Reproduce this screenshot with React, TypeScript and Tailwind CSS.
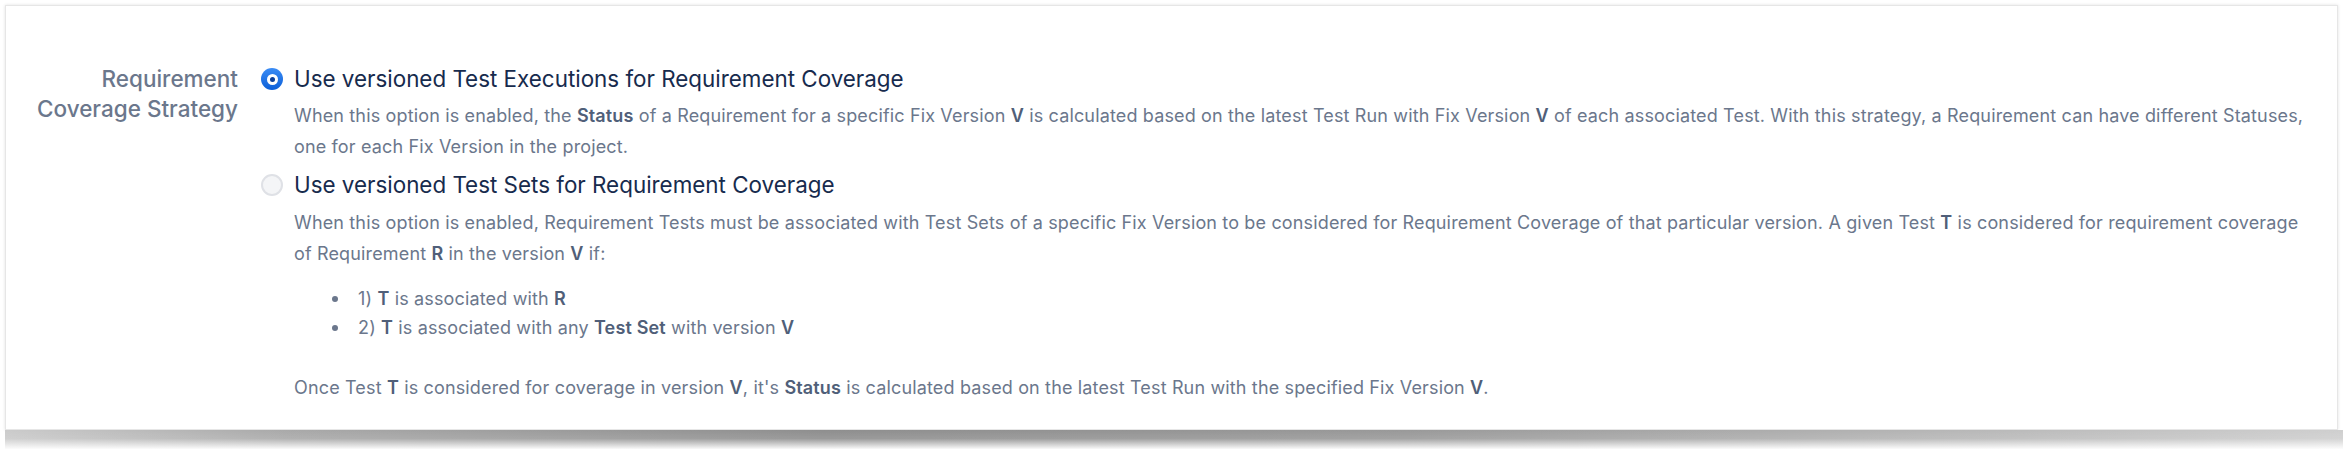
import { ReactNode } from 'react'

const B = ({ children }: { children: ReactNode }) => (
    <span className="font-semibold text-[#505f79]">{children}</span>
)

const RadioOn = () => (
    <span className="flex h-[22px] w-[22px] shrink-0 items-center justify-center rounded-full bg-[linear-gradient(to_bottom,#3b8cf5,#0c5fd8)]">
        <span className="flex h-[11px] w-[11px] items-center justify-center rounded-full bg-white">
            <span className="h-[5px] w-[5px] rounded-full bg-[#0b3f9a]" />
        </span>
    </span>
)

const RadioOff = () => (
    <span className="h-[22px] w-[22px] shrink-0 rounded-full border-2 border-[#dfe1e6] bg-[#f4f5f7]" />
)

const Bullet = ({ children }: { children: ReactNode }) => (
    <li className="flex items-center">
        <span className="ml-[38px] h-[6px] w-[6px] shrink-0 rounded-full bg-[#6b778c]" />
        <span className="ml-[20px]">{children}</span>
    </li>
)

const App = () => {
    return (
        <div className="min-h-[459px] w-[2352px] overflow-hidden bg-white pl-[5px] pt-[5px] font-['Inter',sans-serif]">
            <div className="h-[425px] w-[2333px] border border-[#e6e6e6] bg-white pt-[58px] shadow-[0_0_3px_rgba(0,0,0,0.12)]">
                <div className="flex">
                    <div className="w-[232px] shrink-0 whitespace-nowrap text-right text-[22.5px] font-medium leading-[30px] text-[#6b778c]">
                        Requirement
                        <br />
                        Coverage Strategy
                    </div>

                    <div className="ml-[23px] flex flex-col">
                        <label className="flex items-center gap-[11px]">
                            <RadioOn />
                            <span className="text-[22.4px] leading-[30px] text-[#172b4d]">
                                Use versioned Test Executions for Requirement Coverage
                            </span>
                        </label>
                        <p className="mt-[6px] w-[2085px] whitespace-nowrap pl-[33px] text-[18px] leading-[31px] tracking-[0.15px] text-[#6b778c]">
                            When this option is enabled, the <B>Status</B> of a Requirement for a specific Fix Version{' '}
                            <B>V</B> is calculated based on the latest Test Run with Fix Version <B>V</B> of each
                            associated Test. With this strategy, a Requirement can have different Statuses,
                            <br />
                            one for each Fix Version in the project.
                        </p>

                        <label className="mt-[8px] flex items-center gap-[11px]">
                            <RadioOff />
                            <span className="text-[22.4px] leading-[30px] text-[#172b4d]">
                                Use versioned Test Sets for Requirement Coverage
                            </span>
                        </label>
                        <div className="w-[2085px] whitespace-nowrap pl-[33px] text-[18px] tracking-[0.15px] text-[#6b778c]">
                            <p className="mt-[7px] leading-[31px]">
                                When this option is enabled, Requirement Tests must be associated with Test Sets of a
                                specific Fix Version to be considered for Requirement Coverage of that particular
                                version. A given Test <B>T</B> is considered for requirement coverage
                                <br />
                                of Requirement <B>R</B> in the version <B>V</B> if:
                            </p>
                            <ul className="mt-[15px] leading-[29px]">
                                <Bullet>
                                    1) <B>T</B> is associated with <B>R</B>
                                </Bullet>
                                <Bullet>
                                    2) <B>T</B> is associated with any <B>Test Set</B> with version <B>V</B>
                                </Bullet>
                            </ul>
                            <p className="mt-[30px] leading-[31px]">
                                Once Test <B>T</B> is considered for coverage in version <B>V</B>, it's <B>Status</B>{' '}
                                is calculated based on the latest Test Run with the specified Fix Version <B>V</B>.
                            </p>
                        </div>
                    </div>
                </div>
            </div>
            <div className="relative h-[19px] w-[2338px] bg-[linear-gradient(to_right,#cbcbcb_0%,#a9a9a9_12%,#8e8e8e_35%,#999999_60%,#b9b9b9_85%,#cfcfcf_100%)] blur-[0.6px]">
                <div className="h-full w-full bg-[linear-gradient(to_bottom,rgba(255,255,255,0)_0%,rgba(255,255,255,0.1)_45%,rgba(255,255,255,0.95)_100%)]" />
            </div>
        </div>
    )
}

export default App
